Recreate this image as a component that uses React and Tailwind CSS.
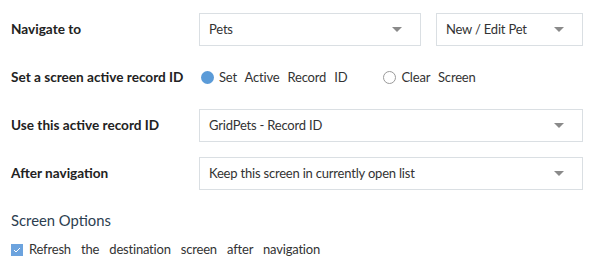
import React from "react";

const Caret = () => (
  <svg width="10" height="6" viewBox="0 0 10 6" className="shrink-0">
    <path d="M0 0 L10 0 L5 5 Z" fill="#8a8a8a" />
  </svg>
);

const Select = ({ value, className = "" }) => (
  <div
    className={`flex items-center justify-between h-[33px] border border-[#dadfe3] bg-white pl-[9px] pr-[18px] text-[13px] tracking-[-0.2px] text-[#333] ${className}`}
  >
    <span>{value}</span>
    <Caret />
  </div>
);

const Row = ({ label, children }) => (
  <div className="flex items-center h-[33px]">
    <div className="w-[188px] shrink-0 font-bold text-[13.6px] text-[#222]">{label}</div>
    <div className="flex-1 flex items-center">{children}</div>
  </div>
);

const App = () => {
  return (
    <div
      className="w-[596px] h-[266px] bg-white pl-[11px] pr-[13px] pt-[13px]"
      style={{ fontFamily: '"Lato", "Noto Sans", sans-serif' }}
    >
      <div className="flex flex-col gap-[15px]">
        <Row label="Navigate to">
          <Select value="Pets" className="w-[222px]" />
          <Select value="New / Edit Pet" className="w-[147px] ml-[15px]" />
        </Row>
        <Row label="Set a screen active record ID">
          <div className="flex items-center text-[13px] tracking-[-0.2px] text-[#333] [word-spacing:5px]">
            <span className="w-[13px] h-[13px] rounded-full bg-[#5b9bd8] ml-[2px] mr-[5px]" />
            <span>Set Active Record ID</span>
            <span className="w-[13px] h-[13px] rounded-full border border-[#9a9a9a] ml-[36px] mr-[5px]" />
            <span>Clear Screen</span>
          </div>
        </Row>
        <Row label="Use this active record ID">
          <Select value="GridPets - Record ID" className="flex-1" />
        </Row>
        <Row label="After navigation">
          <Select value="Keep this screen in currently open list" className="flex-1" />
        </Row>
      </div>
      <div className="mt-[19px] text-[14.8px] text-[#2c3e50]">Screen Options</div>
      <div className="mt-[9px] flex items-center text-[13px] tracking-[-0.2px] text-[#333] [word-spacing:7px]">
        <span className="w-[12px] h-[12px] bg-[#6ca3de] flex items-center justify-center mr-[6px]">
          <svg width="8" height="6" viewBox="0 0 8 6">
            <path d="M1 3 L3 5 L7 1" stroke="#fff" strokeWidth="1" fill="none" />
          </svg>
        </span>
        <span>Refresh the destination screen after navigation</span>
      </div>
    </div>
  );
};

export default App;
